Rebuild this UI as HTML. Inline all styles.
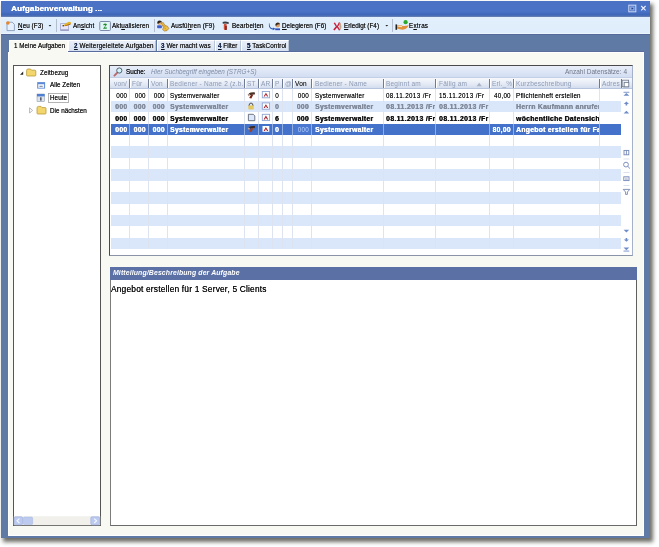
<!DOCTYPE html>
<html><head><meta charset="utf-8">
<style>
*{box-sizing:border-box;margin:0;padding:0}
html,body{width:659px;height:547px;overflow:hidden;background:#fff;font-family:"Liberation Sans",sans-serif;color:#222}
div,span{position:absolute}
.t{white-space:nowrap;will-change:transform}
u{text-decoration-thickness:.5px;text-underline-offset:.8px;text-decoration-color:rgba(0,0,0,.6)}
b{font-weight:bold;color:#1d2d50}
</style></head><body>
<div style="left:1px;top:1.2px;width:649.3px;height:537px;background:#607aa6;box-shadow:2.5px 3px 4px 0.5px rgba(50,50,40,.7)"></div>
<div style="left:1px;top:1.2px;width:649.3px;height:15.5px;background:linear-gradient(#4b72c4,#4a72c6 65%,#3e66b6 88%,#6f86b4)"></div>
<div style="left:1px;top:16.7px;width:649.3px;height:17px;background:linear-gradient(#e2f0fd,#dfedfc 90%,#eef8ff)"></div>
<div style="left:1px;top:33.7px;width:649.3px;height:1.8px;background:#56699a"></div>
<div style="left:7.7px;top:50.6px;width:636.3px;height:1px;background:#5a6c9c"></div>
<div style="left:56px;top:18.5px;width:1px;height:13px;background:#b4bece"></div>
<div style="left:154px;top:18.5px;width:1px;height:13px;background:#b4bece"></div>
<div style="left:392.4px;top:18.5px;width:1px;height:13px;background:#b4bece"></div>
<div style="left:7.7px;top:51.5px;width:636.3px;height:484px;background:#f9f9f4;border:1px solid #fff"></div>
<div style="left:68.2px;top:40.2px;width:88.3px;height:11.3px;background:linear-gradient(#eaf0f8,#d6e0f0);border:1px solid #fff;border-right:1px solid #b8c4d8;border-bottom:none"></div>
<div style="left:156.5px;top:40.2px;width:58.5px;height:11.3px;background:linear-gradient(#eaf0f8,#d6e0f0);border:1px solid #fff;border-right:1px solid #b8c4d8;border-bottom:none"></div>
<div style="left:215px;top:40.2px;width:26.0px;height:11.3px;background:linear-gradient(#eaf0f8,#d6e0f0);border:1px solid #fff;border-right:1px solid #b8c4d8;border-bottom:none"></div>
<div style="left:241px;top:40.2px;width:48.0px;height:11.3px;background:linear-gradient(#eaf0f8,#d6e0f0);border:1px solid #fff;border-right:1px solid #b8c4d8;border-bottom:none"></div>
<div style="left:8.6px;top:39.8px;width:59.6px;height:13.4px;background:#f9f9f4;border:1px solid #fff;border-bottom:none"></div>
<div style="left:12.8px;top:64.7px;width:88.2px;height:461.5px;background:#fff;border:1px solid #555"></div>
<div style="left:109.2px;top:64.9px;width:523.6px;height:191px;background:#fff;border-top:1px solid #4a4a4a;border-left:1px solid #4a4a4a;border-right:1px solid #a6b1cb;border-bottom:1px solid #8a93a8"></div>
<div style="left:109.6px;top:266.8px;width:527.6px;height:259.2px;background:#fff;border-left:1px solid #7c7c7c;border-right:1px solid #606060;border-bottom:1px solid #6a6a6a"></div>
<div style="left:110.1px;top:267px;width:526.5px;height:13.1px;background:#5b71a6"></div>
<div style="left:110.3px;top:65.9px;width:522px;height:11.9px;background:linear-gradient(#e8eef9,#d2def2);border-bottom:1px solid #c3cfe6"></div>
<div style="left:110.3px;top:77.8px;width:522px;height:11.5px;background:linear-gradient(#f6f8fc,#e4eaf5 60%,#d3ddef);border-bottom:1px solid #b6c4e0"></div>
<div style="left:128.5px;top:79.2px;width:1px;height:8.8px;background:#6f7b94"></div>
<div style="left:129.5px;top:79.2px;width:1px;height:8.8px;background:#fff"></div>
<div style="left:147.5px;top:79.2px;width:1px;height:8.8px;background:#6f7b94"></div>
<div style="left:148.5px;top:79.2px;width:1px;height:8.8px;background:#fff"></div>
<div style="left:166.5px;top:79.2px;width:1px;height:8.8px;background:#6f7b94"></div>
<div style="left:167.5px;top:79.2px;width:1px;height:8.8px;background:#fff"></div>
<div style="left:243.5px;top:79.2px;width:1px;height:8.8px;background:#6f7b94"></div>
<div style="left:244.5px;top:79.2px;width:1px;height:8.8px;background:#fff"></div>
<div style="left:257.8px;top:79.2px;width:1px;height:8.8px;background:#6f7b94"></div>
<div style="left:258.8px;top:79.2px;width:1px;height:8.8px;background:#fff"></div>
<div style="left:271.9px;top:79.2px;width:1px;height:8.8px;background:#6f7b94"></div>
<div style="left:272.9px;top:79.2px;width:1px;height:8.8px;background:#fff"></div>
<div style="left:281.9px;top:79.2px;width:1px;height:8.8px;background:#6f7b94"></div>
<div style="left:282.9px;top:79.2px;width:1px;height:8.8px;background:#fff"></div>
<div style="left:291.9px;top:79.2px;width:1px;height:8.8px;background:#6f7b94"></div>
<div style="left:292.9px;top:79.2px;width:1px;height:8.8px;background:#fff"></div>
<div style="left:311.0px;top:79.2px;width:1px;height:8.8px;background:#6f7b94"></div>
<div style="left:312.0px;top:79.2px;width:1px;height:8.8px;background:#fff"></div>
<div style="left:382.5px;top:79.2px;width:1px;height:8.8px;background:#6f7b94"></div>
<div style="left:383.5px;top:79.2px;width:1px;height:8.8px;background:#fff"></div>
<div style="left:435.0px;top:79.2px;width:1px;height:8.8px;background:#6f7b94"></div>
<div style="left:436.0px;top:79.2px;width:1px;height:8.8px;background:#fff"></div>
<div style="left:488.5px;top:79.2px;width:1px;height:8.8px;background:#6f7b94"></div>
<div style="left:489.5px;top:79.2px;width:1px;height:8.8px;background:#fff"></div>
<div style="left:512.5px;top:79.2px;width:1px;height:8.8px;background:#6f7b94"></div>
<div style="left:513.5px;top:79.2px;width:1px;height:8.8px;background:#fff"></div>
<div style="left:598.5px;top:79.2px;width:1px;height:8.8px;background:#6f7b94"></div>
<div style="left:599.5px;top:79.2px;width:1px;height:8.8px;background:#fff"></div>
<div style="left:621.0px;top:79.2px;width:1px;height:8.8px;background:#6f7b94"></div>
<div style="left:622.0px;top:79.2px;width:1px;height:8.8px;background:#fff"></div>
<div style="left:111.3px;top:89.30px;width:510.2px;height:11.46px;background:#fff"></div>
<div style="left:111.3px;top:100.72px;width:510.2px;height:11.46px;background:#dae6fa"></div>
<div style="left:111.3px;top:112.14px;width:510.2px;height:11.46px;background:#fff"></div>
<div style="left:111.3px;top:123.56px;width:510.2px;height:11.46px;background:#4471c9"></div>
<div style="left:111.3px;top:134.98px;width:510.2px;height:11.46px;background:#fff"></div>
<div style="left:111.3px;top:146.40px;width:510.2px;height:11.46px;background:#dae6fa"></div>
<div style="left:111.3px;top:157.82px;width:510.2px;height:11.46px;background:#fff"></div>
<div style="left:111.3px;top:169.24px;width:510.2px;height:11.46px;background:#dae6fa"></div>
<div style="left:111.3px;top:180.66px;width:510.2px;height:11.46px;background:#fff"></div>
<div style="left:111.3px;top:192.08px;width:510.2px;height:11.46px;background:#dae6fa"></div>
<div style="left:111.3px;top:203.50px;width:510.2px;height:11.46px;background:#fff"></div>
<div style="left:111.3px;top:214.92px;width:510.2px;height:11.46px;background:#dae6fa"></div>
<div style="left:111.3px;top:226.34px;width:510.2px;height:11.46px;background:#fff"></div>
<div style="left:111.3px;top:237.76px;width:510.2px;height:11.46px;background:#dae6fa"></div>
<div style="left:128.5px;top:89.3px;width:1px;height:159.9px;background:#dde3ef"></div>
<div style="left:147.5px;top:89.3px;width:1px;height:159.9px;background:#dde3ef"></div>
<div style="left:166.5px;top:89.3px;width:1px;height:159.9px;background:#dde3ef"></div>
<div style="left:243.5px;top:89.3px;width:1px;height:159.9px;background:#dde3ef"></div>
<div style="left:257.8px;top:89.3px;width:1px;height:159.9px;background:#dde3ef"></div>
<div style="left:271.9px;top:89.3px;width:1px;height:159.9px;background:#dde3ef"></div>
<div style="left:281.9px;top:89.3px;width:1px;height:159.9px;background:#dde3ef"></div>
<div style="left:291.9px;top:89.3px;width:1px;height:159.9px;background:#dde3ef"></div>
<div style="left:311.0px;top:89.3px;width:1px;height:159.9px;background:#dde3ef"></div>
<div style="left:382.5px;top:89.3px;width:1px;height:159.9px;background:#dde3ef"></div>
<div style="left:435.0px;top:89.3px;width:1px;height:159.9px;background:#dde3ef"></div>
<div style="left:488.5px;top:89.3px;width:1px;height:159.9px;background:#dde3ef"></div>
<div style="left:512.5px;top:89.3px;width:1px;height:159.9px;background:#dde3ef"></div>
<div style="left:598.5px;top:89.3px;width:1px;height:159.9px;background:#dde3ef"></div>
<div style="left:128.5px;top:123.56px;width:1px;height:11.42px;background:#8eaee4"></div>
<div style="left:147.5px;top:123.56px;width:1px;height:11.42px;background:#8eaee4"></div>
<div style="left:166.5px;top:123.56px;width:1px;height:11.42px;background:#8eaee4"></div>
<div style="left:243.5px;top:123.56px;width:1px;height:11.42px;background:#8eaee4"></div>
<div style="left:257.8px;top:123.56px;width:1px;height:11.42px;background:#8eaee4"></div>
<div style="left:271.9px;top:123.56px;width:1px;height:11.42px;background:#8eaee4"></div>
<div style="left:281.9px;top:123.56px;width:1px;height:11.42px;background:#8eaee4"></div>
<div style="left:291.9px;top:123.56px;width:1px;height:11.42px;background:#8eaee4"></div>
<div style="left:311.0px;top:123.56px;width:1px;height:11.42px;background:#8eaee4"></div>
<div style="left:382.5px;top:123.56px;width:1px;height:11.42px;background:#8eaee4"></div>
<div style="left:435.0px;top:123.56px;width:1px;height:11.42px;background:#8eaee4"></div>
<div style="left:488.5px;top:123.56px;width:1px;height:11.42px;background:#8eaee4"></div>
<div style="left:512.5px;top:123.56px;width:1px;height:11.42px;background:#8eaee4"></div>
<div style="left:598.5px;top:123.56px;width:1px;height:11.42px;background:#8eaee4"></div>
<div style="left:292.6px;top:124.16px;width:18.6px;height:10.22px;background:#4a78d0"></div>
<svg width="659" height="547" viewBox="0 0 659 547" style="position:absolute;left:0;top:0;pointer-events:none">
<!-- title buttons -->
<rect x="628.8" y="5.2" width="7" height="6.6" fill="none" stroke="#c4d2f2" stroke-width="1.1"/>
<rect x="630.7" y="7" width="3.3" height="3" fill="none" stroke="#a9bde8" stroke-width="0.8"/>
<rect x="631.9" y="8.1" width="1" height="0.9" fill="#1f3470"/>
<path d="M641.2 6 L645.6 10.4 M645.6 6 L641.2 10.4" stroke="#eef2ff" stroke-width="1.1"/>
<!-- Neu icon -->
<path d="M7 22.2 H12.2 L14.4 24.4 V30.6 H7 Z" fill="#e6f0fc" stroke="#7d8fb0" stroke-width="0.8"/>
<circle cx="7.9" cy="23" r="1.8" fill="#e8862a"/>
<path d="M48.6 25 L51.4 25 L50 26.6 Z" fill="#222"/>
<!-- Ansicht icon -->
<rect x="60.6" y="23.6" width="8" height="6.8" fill="#e8e6f6" stroke="#a4a6cc" stroke-width="0.8"/>
<rect x="60.6" y="29.4" width="8" height="1.1" fill="#8c8eb8"/>
<path d="M63.4 25.2 L67.2 22.4 Q69.8 21.2 71 22.6 L70.6 24.2 Q68.4 25.4 64.4 26 Z" fill="#e2b22a"/>
<path d="M65 25.4 Q68.6 24.8 70.8 23.6 L70.4 24.6 Q68 26 64.6 26.2 Z" fill="#a8581a"/>
<circle cx="63.2" cy="25.7" r="0.8" fill="#2a2a1a"/>
<!-- Aktualisieren icon -->
<rect x="99.8" y="21.5" width="10.6" height="9" rx="0.8" fill="#e2f6f4" stroke="#7c89a8" stroke-width="1"/>
<path d="M103.2 24.2 Q105.5 22.6 107 24.4 L104.6 27.6 L107 27.6 L106.6 28.8 L103 28.8 L105.4 25.4 Q104.6 24.8 103.8 25.4 Z" fill="#1f8a32"/>
<!-- Ausfuehren icon -->
<circle cx="159.6" cy="23" r="2.1" fill="#e0ae74"/>
<path d="M157.3 23.4 Q157 20.4 159.6 20.4 Q162 20.4 161.9 22.4 Q160.2 21.6 158.2 23.8Z" fill="#2e2418"/>
<rect x="157.1" y="25.2" width="4.8" height="3.1" rx="0.8" fill="#4060d0"/>
<path d="M161.4 23.2 L163.2 22.4 L164.6 25 L167.6 26.4 L168.8 28.6 L167 30.6 L164.4 31 L162.6 29.6 L163.4 27.4 Z" fill="#f0c040" stroke="#9a6a20" stroke-width="0.6"/>
<path d="M164 27.6 L166.4 29.4 M163 25.4 L165.6 26.8" stroke="#b07a28" stroke-width="0.5"/>
<!-- Bearbeiten hammer -->
<path d="M222.6 22 Q225 20.8 228.8 22.2 L228.6 24 Q226 23.2 222.8 23.8 Z" fill="#3a3e44"/>
<rect x="223.8" y="23.8" width="2.9" height="6.1" rx="1.2" fill="#d0503a"/>
<rect x="225.3" y="26" width="1.4" height="4" fill="#7a1a14"/>
<!-- Delegieren -->
<path d="M269.5 23.3 Q269.3 28 273 28.6 L272.8 27.4 L275.6 28.8 L272.8 30.2 L272.8 29.4 Q268.4 29 268.9 23.4 Z" fill="#2a58b8"/>
<circle cx="277.6" cy="25.3" r="2.3" fill="#d9a070"/>
<path d="M275.3 25 Q275.5 22.4 277.8 22.5 Q280 22.6 280 24.6 Q278.5 23.8 276.2 25.8Z" fill="#3a2a1a"/>
<rect x="275.2" y="28.4" width="4.8" height="1.8" fill="#2f4fc0"/>
<!-- Erledigt X -->
<path d="M335 22.5 L337 26 L339 22 L340.4 23.2 L338 26.6 L340.4 30 L339 30.4 L337 27.6 L334.6 30.4 L333.2 29.6 L335.8 26.4 L333.6 23 Z" fill="#c8203c"/>
<path d="M339.8 22 Q341.6 24 341.5 27 Q341 29.5 339.8 30 Q339.6 26 339 23.5Z" fill="#b89a70" opacity=".8"/>
<path d="M385.4 25.1 L388.2 25.1 L386.8 26.6 Z" fill="#222"/>
<!-- Extras -->
<rect x="395.5" y="24.4" width="1.6" height="5.4" fill="#222"/>
<path d="M397 25.2 Q400 24.5 403 26 Q406 26.2 408.6 25.2 Q407.5 28.5 403.5 29.6 Q400 29.8 397 28.6 Z" fill="#e0903a"/>
<path d="M397.6 25.6 Q400.5 25 402.5 26.4 L401.6 27.2 Q399.5 26.4 397.6 26.8Z" fill="#f8e2c0"/>
<circle cx="405.6" cy="22.2" r="2.1" fill="#2ba82e"/>
<!-- tree -->
<path d="M20 74.8 L23.2 71.6 L23.2 74.8 Z" fill="#222"/>
<path d="M26.6 70.6 Q26.6 69 28 69 L30.6 69 L31.6 70.2 L35 70.2 Q35.8 70.2 35.8 71 L35.8 75.2 Q35.8 76 35 76 L27.4 76 Q26.6 76 26.6 75.2 Z" fill="#f3d66c" stroke="#b99a3e" stroke-width="0.8"/>
<rect x="37.2" y="82.1" width="7.9" height="6.5" fill="#5d8ad6"/>
<rect x="38.2" y="84.2" width="5.9" height="3.6" fill="#f4f6fa"/>
<rect x="39.5" y="85.8" width="3.2" height="1.2" fill="#8a93a8"/>
<rect x="37" y="94" width="7.6" height="7.7" fill="#dfe3ea" stroke="#8090a8" stroke-width="0.5"/>
<rect x="37" y="94" width="7.6" height="2.4" fill="#4f7fd4"/>
<rect x="40.2" y="97.3" width="1.3" height="3.3" fill="#3a4050"/>
<rect x="48.4" y="93.4" width="20.2" height="9" fill="none" stroke="#a2a2a2" stroke-width="0.8"/>
<path d="M29.6 107.8 L32.6 110.4 L29.6 113 Z" fill="none" stroke="#9a9a9a" stroke-width="0.7"/>
<path d="M37 108.2 Q37 106.4 38.4 106.4 L41 106.4 L42 107.6 L45.2 107.6 Q46 107.6 46 108.4 L46 113.2 Q46 114 45.2 114 L37.8 114 Q37 114 37 113.2 Z" fill="#f3d66c" stroke="#b99a3e" stroke-width="0.8"/>
<!-- search icon -->
<path d="M114.4 75.6 L117 73" stroke="#b86a6a" stroke-width="1.8" stroke-linecap="round"/>
<circle cx="119.3" cy="70.5" r="2.6" fill="#d6f3fa" stroke="#34404e" stroke-width="0.8"/>
<!-- grid icons -->
<path d="M248.6 93.6 Q251 92 255 92.4 L254.8 94.6 Q252.6 94.2 250.4 95.2 Z" fill="#4a3228"/>
<path d="M251.2 94.4 L253.4 94.6 L251.4 98.4 L249.2 98 Z" fill="#7a2416"/>
<path d="M247.6 94.6 Q248.6 93.6 250 94.4 L249 96.4 Z" fill="#9a8070"/>
<path d="M248.6 127.2 Q251 125.6 255 126 L254.8 128.2 Q252.6 127.8 250.4 128.8 Z" fill="#3a2a22"/>
<path d="M251.2 128 L253.4 128.2 L251.4 132 L249.2 131.6 Z" fill="#a0401c"/>
<path d="M247.6 128.2 Q248.6 127.2 250 128 L249 130 Z" fill="#c0a090"/>
<rect x="262.3" y="91.5" width="7.3" height="6.3" fill="#fff" stroke="#8ea4d2" stroke-width="0.9"/>
<path d="M263.6 96.6 L265.9 92.8 L268.3 96.6 L267 96.6 L265.9 94.6 L264.9 96.6Z" fill="#a8202a"/>
<rect x="262.3" y="102.9" width="7.3" height="6.3" fill="#fff" stroke="#8ea4d2" stroke-width="0.9"/>
<path d="M263.6 108 L265.9 104.2 L268.3 108 L267 108 L265.9 106 L264.9 108Z" fill="#a8202a"/>
<rect x="262.3" y="114.3" width="7.3" height="6.3" fill="#fff" stroke="#8ea4d2" stroke-width="0.9"/>
<path d="M263.6 119.4 L265.9 115.6 L268.3 119.4 L267 119.4 L265.9 117.4 L264.9 119.4Z" fill="#a8202a"/>
<rect x="262.5" y="126" width="6.8" height="5.8" fill="#fff"/>
<path d="M263.6 130.9 L265.9 127.1 L268.3 130.9 L267 130.9 L265.9 128.9 L264.9 130.9Z" fill="#a8202a"/>
<path d="M249 106 Q249 103 251 103 Q253 103 253 106" fill="none" stroke="#4a4030" stroke-width="0.9"/>
<rect x="248.3" y="105.4" width="5.5" height="4" rx="1" fill="#e6c860"/>
<path d="M248.4 114.3 H253.2 L254.8 115.8 V120.7 H248.4 Z" fill="#dde8fa" stroke="#505868" stroke-width="0.8"/>
<path d="M476.6 86.2 L479.2 82.8 L481.8 86.2 Z" fill="#a9b3c4"/>
<!-- column chooser -->
<rect x="622.2" y="80.2" width="6.4" height="6.6" fill="none" stroke="#707a8c" stroke-width="0.8"/>
<rect x="624.2" y="82.4" width="4.6" height="4.4" fill="#fff" stroke="#707a8c" stroke-width="0.8"/>
<!-- nav strip icons -->
<g fill="#6f8cc8">
<rect x="623.5" y="91.8" width="5.8" height="0.9"/>
<path d="M623.5 95.8 L626.4 93 L629.3 95.8 Z"/>
<path d="M623.8 104 L626.4 101.6 L629 104 L627.2 104 L627.2 105.4 L625.6 105.4 L625.6 104 Z"/>
<path d="M623.6 113.6 L626.4 110.8 L629.2 113.6 Z"/>
<path d="M623.6 229.8 L626.4 232.6 L629.2 229.8 Z"/>
<path d="M623.8 239.4 L626.4 241.8 L629 239.4 L627.2 239.4 L627.2 238 L625.6 238 L625.6 239.4 Z"/>
<path d="M623.5 247.4 L626.4 250.2 L629.3 247.4 Z"/>
<rect x="623.5" y="250.6" width="5.8" height="0.9"/>
</g>
<g fill="none" stroke="#7286b6" stroke-width="0.9">
<rect x="624" y="150.4" width="4.8" height="4.4"/>
<path d="M626.4 150.4 V154.8"/>
<circle cx="626" cy="164.6" r="2.4"/>
<path d="M627.7 166.3 L630 168.6"/>
<rect x="623.8" y="176.8" width="5.2" height="3.8"/>
<path d="M625 178.2 H627.8 M625 179.4 H627.8" stroke-width="0.5"/>
<path d="M623.2 189.4 H629.8 L627.4 192 V194.4 H625.6 V192 Z"/>
</g>
<g stroke="#c9d3e6" stroke-width="0.7">
<path d="M623.5 159 H629.5 M623.5 172.5 H629.5 M623.5 185.5 H629.5"/>
</g>
<!-- tree scrollbar -->
<rect x="13.8" y="516.2" width="86.4" height="9" fill="#f1f0eb"/>
<rect x="14.2" y="516.8" width="8.4" height="8" rx="1.2" fill="#bccaf0" stroke="#98aadc" stroke-width="0.6"/>
<path d="M19.4 518.6 L17 520.8 L19.4 523" fill="none" stroke="#f4f8ff" stroke-width="1.1"/>
<rect x="23.4" y="517" width="9.2" height="7.6" rx="1.2" fill="#bccaf0" stroke="#a4b4e0" stroke-width="0.5"/>
<rect x="90.8" y="516.8" width="8.8" height="8" rx="1.2" fill="#bccaf0" stroke="#98aadc" stroke-width="0.6"/>
<path d="M94.2 518.6 L96.6 520.8 L94.2 523" fill="none" stroke="#f4f8ff" stroke-width="1.1"/>
</svg>

<span class="t" style="left:10.80px;top:3.89px;font-size:8.1px;line-height:10px;font-weight:bold;font-style:normal;color:#fff;letter-spacing:0.093px;text-shadow:.3px 0 0 #fff;">Aufgabenverwaltung ...</span>
<span class="t" style="left:17.90px;top:20.72px;font-size:6.3px;line-height:10px;font-weight:normal;font-style:normal;color:#222;letter-spacing:0.063px;text-shadow:0 0 .2px currentColor;"><u>N</u>eu (F3)</span>
<span class="t" style="left:72.80px;top:20.72px;font-size:6.3px;line-height:10px;font-weight:normal;font-style:normal;color:#222;letter-spacing:0.088px;text-shadow:0 0 .2px currentColor;">An<u>s</u>icht</span>
<span class="t" style="left:111.80px;top:20.72px;font-size:6.3px;line-height:10px;font-weight:normal;font-style:normal;color:#222;letter-spacing:0.077px;text-shadow:0 0 .2px currentColor;">Akt<u>u</u>alisieren</span>
<span class="t" style="left:171.00px;top:20.72px;font-size:6.3px;line-height:10px;font-weight:normal;font-style:normal;color:#222;letter-spacing:0.121px;text-shadow:0 0 .2px currentColor;">Ausfü<u>h</u>ren (F9)</span>
<span class="t" style="left:232.00px;top:20.72px;font-size:6.3px;line-height:10px;font-weight:normal;font-style:normal;color:#222;letter-spacing:0.124px;text-shadow:0 0 .2px currentColor;">Bearbei<u>t</u>en</span>
<span class="t" style="left:282.00px;top:20.72px;font-size:6.3px;line-height:10px;font-weight:normal;font-style:normal;color:#222;letter-spacing:0.045px;text-shadow:0 0 .2px currentColor;"><u>D</u>elegieren (F6)</span>
<span class="t" style="left:344.00px;top:20.72px;font-size:6.3px;line-height:10px;font-weight:normal;font-style:normal;color:#222;letter-spacing:0.029px;text-shadow:0 0 .2px currentColor;"><u>E</u>rledigt (F4)</span>
<span class="t" style="left:409.00px;top:20.72px;font-size:6.3px;line-height:10px;font-weight:normal;font-style:normal;color:#222;letter-spacing:0.228px;text-shadow:0 0 .2px currentColor;">E<u>x</u>tras</span>
<span class="t" style="left:14.10px;top:40.52px;font-size:6.3px;line-height:10px;font-weight:normal;font-style:normal;color:#222;letter-spacing:0.016px;text-shadow:0 0 .2px currentColor;">1 Meine Aufgaben</span>
<span class="t" style="left:74.00px;top:41.22px;font-size:6.3px;line-height:10px;font-weight:normal;font-style:normal;color:#222;letter-spacing:0.163px;text-shadow:0 0 .2px currentColor;"><u><b>2</b></u> Weitergeleitete Aufgaben</span>
<span class="t" style="left:161.40px;top:41.22px;font-size:6.3px;line-height:10px;font-weight:normal;font-style:normal;color:#222;letter-spacing:0.075px;text-shadow:0 0 .2px currentColor;"><u><b>3</b></u> Wer macht was</span>
<span class="t" style="left:218.30px;top:41.22px;font-size:6.3px;line-height:10px;font-weight:normal;font-style:normal;color:#222;letter-spacing:0.019px;text-shadow:0 0 .2px currentColor;"><u><b>4</b></u> Filter</span>
<span class="t" style="left:246.80px;top:41.22px;font-size:6.3px;line-height:10px;font-weight:normal;font-style:normal;color:#222;letter-spacing:0.083px;text-shadow:0 0 .2px currentColor;"><u><b>5</b></u> TaskControl</span>
<span class="t" style="left:39.60px;top:67.82px;font-size:6.3px;line-height:10px;font-weight:normal;font-style:normal;color:#222;letter-spacing:0.080px;text-shadow:0 0 .2px currentColor;">Zeitbezug</span>
<span class="t" style="left:50.00px;top:80.32px;font-size:6.3px;line-height:10px;font-weight:normal;font-style:normal;color:#222;letter-spacing:0.023px;text-shadow:0 0 .2px currentColor;">Alle Zeiten</span>
<span class="t" style="left:50.00px;top:93.12px;font-size:6.3px;line-height:10px;font-weight:normal;font-style:normal;color:#222;letter-spacing:0.047px;text-shadow:0 0 .2px currentColor;">Heute</span>
<span class="t" style="left:50.00px;top:105.52px;font-size:6.3px;line-height:10px;font-weight:normal;font-style:normal;color:#222;letter-spacing:-0.006px;text-shadow:0 0 .2px currentColor;">Die nächsten</span>
<span class="t" style="left:125.50px;top:66.82px;font-size:6.3px;line-height:10px;font-weight:normal;font-style:normal;color:#1a1a1a;letter-spacing:-0.022px;text-shadow:0 0 .2px currentColor;">Suche:</span>
<span class="t" style="left:150.50px;top:66.82px;font-size:6.3px;line-height:10px;font-weight:normal;font-style:italic;color:#7f8ca6;letter-spacing:0.042px;">Hier Suchbegriff eingeben (STRG+S)</span>
<span class="t" style="left:565.40px;top:66.75px;font-size:6.5px;line-height:10px;font-weight:normal;font-style:normal;color:#6f7788;letter-spacing:0.011px;">Anzahl Datensätze: 4</span>
<span class="t" style="left:112.60px;top:267.51px;font-size:6.9px;line-height:10px;font-weight:bold;font-style:italic;color:#fff;letter-spacing:0.125px;">Mitteilung/Beschreibung der Aufgabe</span>
<span class="t" style="left:111.30px;top:284.29px;font-size:8.4px;line-height:10px;font-weight:normal;font-style:normal;color:#111;letter-spacing:0.186px;text-shadow:0 0 .2px currentColor;">Angebot erstellen für 1 Server, 5 Clients</span>
<div class="t" style="left:113.50px;width:15.30px;top:79.05px;font-size:6.5px;line-height:10px;font-weight:normal;color:#8c9ab4;letter-spacing:0.2px;overflow:hidden;">von/</div>
<div class="t" style="left:132.00px;width:15.80px;top:79.05px;font-size:6.5px;line-height:10px;font-weight:normal;color:#8c9ab4;letter-spacing:0.2px;overflow:hidden;">Für</div>
<div class="t" style="left:151.00px;width:15.80px;top:79.05px;font-size:6.5px;line-height:10px;font-weight:normal;color:#8c9ab4;letter-spacing:0.2px;overflow:hidden;">Von</div>
<div class="t" style="left:170.00px;width:73.80px;top:79.05px;font-size:6.5px;line-height:10px;font-weight:normal;color:#8c9ab4;letter-spacing:0.2px;overflow:hidden;">Bediener - Name 2 (z.b.</div>
<div class="t" style="left:247.00px;width:11.10px;top:79.05px;font-size:6.5px;line-height:10px;font-weight:normal;color:#8c9ab4;letter-spacing:0.2px;overflow:hidden;">ST</div>
<div class="t" style="left:261.30px;width:10.90px;top:79.05px;font-size:6.5px;line-height:10px;font-weight:normal;color:#8c9ab4;letter-spacing:0.2px;overflow:hidden;">AR</div>
<div class="t" style="left:275.40px;width:6.80px;top:79.05px;font-size:6.5px;line-height:10px;font-weight:normal;color:#8c9ab4;letter-spacing:0.2px;overflow:hidden;">P</div>
<div class="t" style="left:285.40px;width:6.80px;top:79.05px;font-size:6.5px;line-height:10px;font-weight:normal;color:#8c9ab4;letter-spacing:0.2px;overflow:hidden;">@</div>
<div class="t" style="left:295.40px;width:15.90px;top:79.05px;font-size:6.5px;line-height:10px;font-weight:normal;color:#2a2a2a;letter-spacing:0.2px;overflow:hidden;text-shadow:0 0 .12px rgba(0,0,0,.6);">Von</div>
<div class="t" style="left:314.50px;width:68.30px;top:79.05px;font-size:6.5px;line-height:10px;font-weight:normal;color:#8c9ab4;letter-spacing:0.2px;overflow:hidden;">Bediener - Name</div>
<div class="t" style="left:386.00px;width:49.30px;top:79.05px;font-size:6.5px;line-height:10px;font-weight:normal;color:#8c9ab4;letter-spacing:0.2px;overflow:hidden;">Beginnt am</div>
<div class="t" style="left:438.50px;width:50.30px;top:79.05px;font-size:6.5px;line-height:10px;font-weight:normal;color:#8c9ab4;letter-spacing:0.2px;overflow:hidden;">Fällig am</div>
<div class="t" style="left:492.00px;width:20.80px;top:79.05px;font-size:6.5px;line-height:10px;font-weight:normal;color:#8c9ab4;letter-spacing:0.2px;overflow:hidden;">Erl._%</div>
<div class="t" style="left:516.00px;width:82.80px;top:79.05px;font-size:6.5px;line-height:10px;font-weight:normal;color:#8c9ab4;letter-spacing:0.2px;overflow:hidden;">Kurzbeschreibung</div>
<div class="t" style="left:602.00px;width:19.30px;top:79.05px;font-size:6.5px;line-height:10px;font-weight:normal;color:#8c9ab4;letter-spacing:0.2px;overflow:hidden;">Adres</div>
<div class="t" style="left:110.50px;width:16.30px;text-align:right;top:91.02px;font-size:6.3px;line-height:10px;font-weight:normal;color:#000;letter-spacing:0.2px;overflow:hidden;text-shadow:0 0 .12px rgba(0,0,0,.6);">000</div>
<div class="t" style="left:129.00px;width:16.80px;text-align:right;top:91.02px;font-size:6.3px;line-height:10px;font-weight:normal;color:#000;letter-spacing:0.2px;overflow:hidden;text-shadow:0 0 .12px rgba(0,0,0,.6);">000</div>
<div class="t" style="left:148.00px;width:16.80px;text-align:right;top:91.02px;font-size:6.3px;line-height:10px;font-weight:normal;color:#000;letter-spacing:0.2px;overflow:hidden;text-shadow:0 0 .12px rgba(0,0,0,.6);">000</div>
<div class="t" style="left:170.00px;width:73.80px;top:91.02px;font-size:6.3px;line-height:10px;font-weight:normal;color:#000;letter-spacing:0.2px;overflow:hidden;text-shadow:0 0 .12px rgba(0,0,0,.6);">Systemverwalter</div>
<div class="t" style="left:272.40px;width:10.00px;text-align:center;top:91.02px;font-size:6.3px;line-height:10px;font-weight:normal;color:#000;letter-spacing:0.2px;overflow:hidden;text-shadow:0 0 .12px rgba(0,0,0,.6);">0</div>
<div class="t" style="left:292.40px;width:16.90px;text-align:right;top:91.02px;font-size:6.3px;line-height:10px;font-weight:normal;color:#000;letter-spacing:0.2px;overflow:hidden;text-shadow:0 0 .12px rgba(0,0,0,.6);">000</div>
<div class="t" style="left:314.50px;width:68.30px;top:91.02px;font-size:6.3px;line-height:10px;font-weight:normal;color:#000;letter-spacing:0.2px;overflow:hidden;text-shadow:0 0 .12px rgba(0,0,0,.6);">Systemverwalter</div>
<div class="t" style="left:386.00px;width:49.30px;top:91.02px;font-size:6.3px;line-height:10px;font-weight:normal;color:#000;letter-spacing:0.35px;overflow:hidden;text-shadow:0 0 .12px rgba(0,0,0,.6);">08.11.2013 /Fr</div>
<div class="t" style="left:438.50px;width:50.30px;top:91.02px;font-size:6.3px;line-height:10px;font-weight:normal;color:#000;letter-spacing:0.35px;overflow:hidden;text-shadow:0 0 .12px rgba(0,0,0,.6);">15.11.2013 /Fr</div>
<div class="t" style="left:489.00px;width:21.80px;text-align:right;top:91.02px;font-size:6.3px;line-height:10px;font-weight:normal;color:#000;letter-spacing:0.2px;overflow:hidden;text-shadow:0 0 .12px rgba(0,0,0,.6);">40,00</div>
<div class="t" style="left:516.00px;width:82.80px;top:91.02px;font-size:6.3px;line-height:10px;font-weight:normal;color:#000;letter-spacing:0.2px;overflow:hidden;text-shadow:0 0 .12px rgba(0,0,0,.6);">Pflichtenheft erstellen</div>
<div class="t" style="left:110.50px;width:16.30px;text-align:right;top:102.26px;font-size:6.8px;line-height:10px;font-weight:bold;color:#7f8898;letter-spacing:0.28px;overflow:hidden;text-shadow:.35px 0 0 currentColor;">000</div>
<div class="t" style="left:129.00px;width:16.80px;text-align:right;top:102.26px;font-size:6.8px;line-height:10px;font-weight:bold;color:#7f8898;letter-spacing:0.28px;overflow:hidden;text-shadow:.35px 0 0 currentColor;">000</div>
<div class="t" style="left:148.00px;width:16.80px;text-align:right;top:102.26px;font-size:6.8px;line-height:10px;font-weight:bold;color:#7f8898;letter-spacing:0.28px;overflow:hidden;text-shadow:.35px 0 0 currentColor;">000</div>
<div class="t" style="left:170.00px;width:73.80px;top:102.26px;font-size:6.8px;line-height:10px;font-weight:bold;color:#7f8898;letter-spacing:0.28px;overflow:hidden;text-shadow:.35px 0 0 currentColor;">Systemverwalter</div>
<div class="t" style="left:272.40px;width:10.00px;text-align:center;top:102.26px;font-size:6.8px;line-height:10px;font-weight:bold;color:#7f8898;letter-spacing:0.28px;overflow:hidden;text-shadow:.35px 0 0 currentColor;">0</div>
<div class="t" style="left:292.40px;width:16.90px;text-align:right;top:102.26px;font-size:6.8px;line-height:10px;font-weight:bold;color:#7f8898;letter-spacing:0.28px;overflow:hidden;text-shadow:.35px 0 0 currentColor;">000</div>
<div class="t" style="left:314.50px;width:68.30px;top:102.26px;font-size:6.8px;line-height:10px;font-weight:bold;color:#7f8898;letter-spacing:0.28px;overflow:hidden;text-shadow:.35px 0 0 currentColor;">Systemverwalter</div>
<div class="t" style="left:386.00px;width:49.30px;top:102.26px;font-size:6.8px;line-height:10px;font-weight:bold;color:#7f8898;letter-spacing:0.38px;overflow:hidden;text-shadow:.35px 0 0 currentColor;">08.11.2013 /Fr</div>
<div class="t" style="left:438.50px;width:50.30px;top:102.26px;font-size:6.8px;line-height:10px;font-weight:bold;color:#7f8898;letter-spacing:0.38px;overflow:hidden;text-shadow:.35px 0 0 currentColor;">08.11.2013 /Fr</div>
<div class="t" style="left:516.00px;width:82.80px;top:102.26px;font-size:6.8px;line-height:10px;font-weight:bold;color:#7f8898;letter-spacing:0.28px;overflow:hidden;text-shadow:.35px 0 0 currentColor;">Herrn Kaufmann anrufen</div>
<div class="t" style="left:110.50px;width:16.30px;text-align:right;top:113.68px;font-size:6.8px;line-height:10px;font-weight:bold;color:#111;letter-spacing:0.28px;overflow:hidden;text-shadow:.35px 0 0 currentColor;">000</div>
<div class="t" style="left:129.00px;width:16.80px;text-align:right;top:113.68px;font-size:6.8px;line-height:10px;font-weight:bold;color:#111;letter-spacing:0.28px;overflow:hidden;text-shadow:.35px 0 0 currentColor;">000</div>
<div class="t" style="left:148.00px;width:16.80px;text-align:right;top:113.68px;font-size:6.8px;line-height:10px;font-weight:bold;color:#111;letter-spacing:0.28px;overflow:hidden;text-shadow:.35px 0 0 currentColor;">000</div>
<div class="t" style="left:170.00px;width:73.80px;top:113.68px;font-size:6.8px;line-height:10px;font-weight:bold;color:#111;letter-spacing:0.28px;overflow:hidden;text-shadow:.35px 0 0 currentColor;">Systemverwalter</div>
<div class="t" style="left:272.40px;width:10.00px;text-align:center;top:113.68px;font-size:6.8px;line-height:10px;font-weight:bold;color:#111;letter-spacing:0.28px;overflow:hidden;text-shadow:.35px 0 0 currentColor;">6</div>
<div class="t" style="left:292.40px;width:16.90px;text-align:right;top:113.68px;font-size:6.8px;line-height:10px;font-weight:bold;color:#111;letter-spacing:0.28px;overflow:hidden;text-shadow:.35px 0 0 currentColor;">000</div>
<div class="t" style="left:314.50px;width:68.30px;top:113.68px;font-size:6.8px;line-height:10px;font-weight:bold;color:#111;letter-spacing:0.28px;overflow:hidden;text-shadow:.35px 0 0 currentColor;">Systemverwalter</div>
<div class="t" style="left:386.00px;width:49.30px;top:113.68px;font-size:6.8px;line-height:10px;font-weight:bold;color:#111;letter-spacing:0.38px;overflow:hidden;text-shadow:.35px 0 0 currentColor;">08.11.2013 /Fr</div>
<div class="t" style="left:438.50px;width:50.30px;top:113.68px;font-size:6.8px;line-height:10px;font-weight:bold;color:#111;letter-spacing:0.38px;overflow:hidden;text-shadow:.35px 0 0 currentColor;">08.11.2013 /Fr</div>
<div class="t" style="left:516.00px;width:82.80px;top:113.68px;font-size:6.8px;line-height:10px;font-weight:bold;color:#111;letter-spacing:0.28px;overflow:hidden;text-shadow:.35px 0 0 currentColor;">wöchentliche Datensicherung</div>
<div class="t" style="left:110.50px;width:16.30px;text-align:right;top:125.10px;font-size:6.8px;line-height:10px;font-weight:bold;color:#fff;letter-spacing:0.28px;overflow:hidden;text-shadow:.35px 0 0 currentColor;">000</div>
<div class="t" style="left:129.00px;width:16.80px;text-align:right;top:125.10px;font-size:6.8px;line-height:10px;font-weight:bold;color:#fff;letter-spacing:0.28px;overflow:hidden;text-shadow:.35px 0 0 currentColor;">000</div>
<div class="t" style="left:148.00px;width:16.80px;text-align:right;top:125.10px;font-size:6.8px;line-height:10px;font-weight:bold;color:#fff;letter-spacing:0.28px;overflow:hidden;text-shadow:.35px 0 0 currentColor;">000</div>
<div class="t" style="left:170.00px;width:73.80px;top:125.10px;font-size:6.8px;line-height:10px;font-weight:bold;color:#fff;letter-spacing:0.28px;overflow:hidden;text-shadow:.35px 0 0 currentColor;">Systemverwalter</div>
<div class="t" style="left:272.40px;width:10.00px;text-align:center;top:125.10px;font-size:6.8px;line-height:10px;font-weight:bold;color:#fff;letter-spacing:0.28px;overflow:hidden;text-shadow:.35px 0 0 currentColor;">0</div>
<div class="t" style="left:292.40px;width:16.90px;text-align:right;top:125.28px;font-size:6.3px;line-height:10px;font-weight:normal;color:#b8d0ff;letter-spacing:0.2px;overflow:hidden;">000</div>
<div class="t" style="left:314.50px;width:68.30px;top:125.10px;font-size:6.8px;line-height:10px;font-weight:bold;color:#fff;letter-spacing:0.28px;overflow:hidden;text-shadow:.35px 0 0 currentColor;">Systemverwalter</div>
<div class="t" style="left:489.00px;width:21.80px;text-align:right;top:125.10px;font-size:6.8px;line-height:10px;font-weight:bold;color:#fff;letter-spacing:0.28px;overflow:hidden;text-shadow:.35px 0 0 currentColor;">80,00</div>
<div class="t" style="left:516.00px;width:82.80px;top:125.10px;font-size:6.8px;line-height:10px;font-weight:bold;color:#fff;letter-spacing:0.28px;overflow:hidden;text-shadow:.35px 0 0 currentColor;">Angebot erstellen für Fa</div>
</body></html>
